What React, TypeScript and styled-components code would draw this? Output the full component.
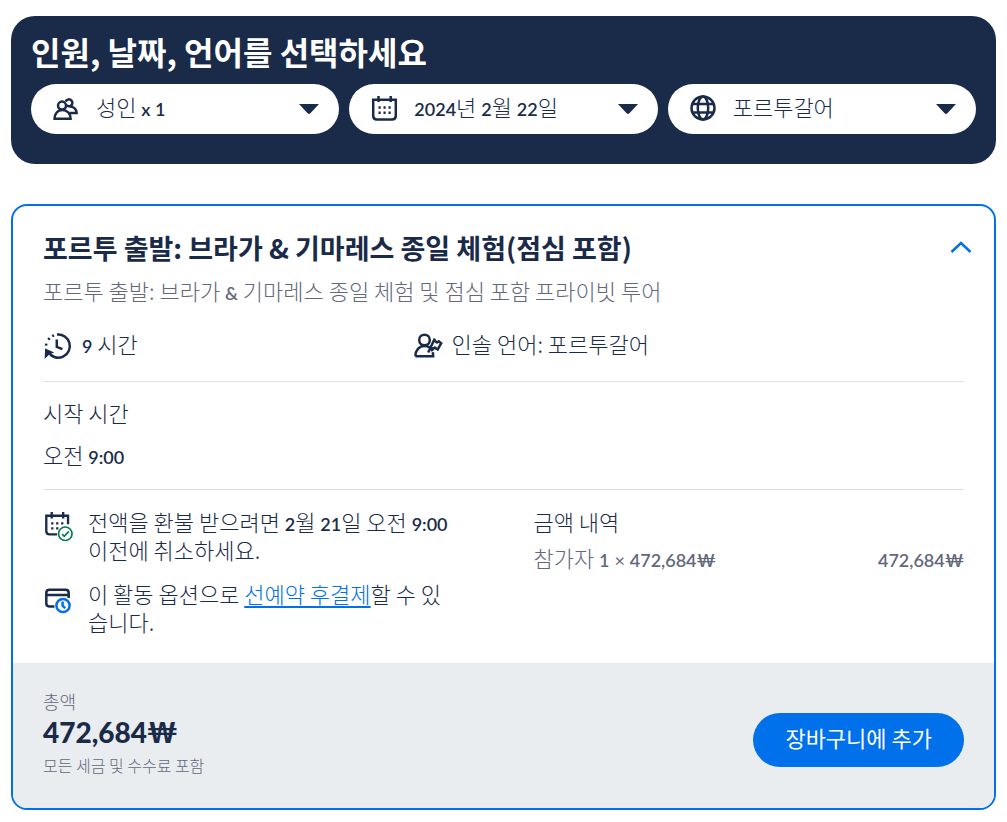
import React from "react";
import styled, { createGlobalStyle, css } from "styled-components";

const navy = "#1a2b49";
const blue = "#0071eb";
const grey = "#63687a";
const hangul = '"Noto Sans CJK KR", "Noto Sans", sans-serif';

const GlobalStyle = createGlobalStyle`
  * { box-sizing: border-box; }
  body {
    margin: 0;
    background: #fff;
    color: ${navy};
    font-family: ${hangul};
    font-size: 22px;
    font-weight: 300;
    line-height: 28px;
  }
  h2, h3, p, ul { margin: 0; padding: 0; font-weight: inherit; font-size: inherit; }
  ul { list-style: none; }
`;

const Page = styled.main`
  padding: 16px 11px 12px;
`;

const SearchPanel = styled.form`
  background: ${navy};
  border-radius: 24px;
  padding: 16px 20px 30px;
`;

const PanelTitle = styled.h2`
  && { font-size: 32px; font-weight: 700; }
  line-height: 38px;
  color: #fff;
  margin-bottom: 14px;
`;

const Fields = styled.div`
  display: grid;
  grid-template-columns: repeat(3, 1fr);
  gap: 10px;
`;

const pill = css`
  display: flex;
  align-items: center;
  gap: 15px;
  width: 100%;
  height: 50px;
  padding: 0 20px;
  border: 0;
  border-radius: 25px;
  background: #fff;
  color: ${navy};
  font: inherit;
  text-align: left;
  cursor: pointer;
`;

const PickerButton = styled.button`${pill}`;
const PickerLabel = styled.label`${pill}`;

const PickerText = styled.span`
  flex: 1;
  padding-bottom: 6px;
  white-space: nowrap;
`;

const PickerSelect = styled.select`
  flex: 1;
  min-width: 0;
  appearance: none;
  border: 0;
  padding: 0 0 6px;
  background: transparent;
  color: inherit;
  font: inherit;
`;

const Num = styled.span<{ $strong?: boolean; $thin?: boolean }>`
  font-family: Lato, ${hangul};
  font-size: ${(p) => (p.$strong ? "28px" : "18px")};
  font-weight: ${(p) => (p.$strong ? 900 : p.$thin ? 400 : 600)};
  line-height: 1;
`;

const Icon = styled.svg<{ $size?: number }>`
  display: block;
  flex: none;
  width: ${(p) => p.$size ?? 30}px;
  height: ${(p) => p.$size ?? 30}px;
  fill: none;
  stroke: currentColor;
  stroke-width: 2.5;
`;

const Caret = styled.svg`
  display: block;
  flex: none;
  width: 20px;
  height: 10px;
  fill: currentColor;
  pointer-events: none;
`;

const Card = styled.article`
  margin-top: 40px;
  border: 2px solid ${blue};
  border-radius: 16px;
  overflow: hidden;
`;

const Section = styled.section`
  margin: 0 30px;
  & + & { border-top: 1px solid #dcdfe4; }
`;

const Overview = styled(Section)`
  padding: 24px 0 20px;
`;

const TitleRow = styled.div`
  display: flex;
  align-items: center;
  justify-content: space-between;
`;

const CardTitle = styled.h3`
  && { font-size: 27px; font-weight: 700; }
  line-height: 36px;
`;

const Toggle = styled.button`
  border: 0;
  padding: 0;
  margin-right: -9px;
  background: none;
  color: ${blue};
  cursor: pointer;
`;

const Subtitle = styled.p`
  margin-top: 10px;
  color: ${grey};
`;

const Facts = styled.ul`
  display: grid;
  grid-template-columns: 2fr 3fr;
  column-gap: 2px;
  margin-top: 27px;
`;

const Fact = styled.li`
  display: flex;
  align-items: center;
  gap: 9px;
  height: 30px;
`;

const FactText = styled.span`
  padding-bottom: 6px;
`;

const StartTime = styled(Section)`
  display: grid;
  gap: 14px;
  padding: 16px 0 21px;
`;

const Details = styled(Section)`
  display: grid;
  grid-template-columns: 1fr 1fr;
  gap: 60px;
  padding: 17px 0 28px;
`;

const Notes = styled.ul`
  display: grid;
  gap: 16px;
  padding-right: 20px;
`;

const Note = styled.li`
  display: flex;
  gap: 15px;
  & > svg { margin-top: 5px; }
`;

const TextLink = styled.a`
  color: ${blue};
  text-decoration: underline 2px;
  text-underline-offset: 3px;
`;

const Breakdown = styled.div`
  display: grid;
  grid-template-columns: 1fr auto;
  align-content: start;
  align-items: baseline;
  row-gap: 8px;
  color: ${grey};
`;

const BreakdownTitle = styled.h3`
  grid-column: 1 / -1;
  color: ${navy};
`;

const Footer = styled.footer`
  display: flex;
  align-items: flex-end;
  justify-content: space-between;
  padding: 24px 30px 29px;
  background: #e9edf0;
`;

const Small = styled.p<{ $size: number }>`
  && { font-size: ${(p) => p.$size}px; }
  color: ${grey};
`;

const Price = styled.p`
  line-height: 36px;
`;

const CartButton = styled.button`
  height: 54px;
  margin-bottom: 12px;
  padding: 0 32px 6px;
  border: 0;
  border-radius: 27px;
  background: ${blue};
  color: #fff;
  font: inherit;
  font-weight: 400;
  cursor: pointer;
`;

const CaretDown = () => (
  <Caret viewBox="0 0 20 10" aria-hidden="true">
    <path d="M0 0h20l-8.600 9.200q-1.400 1.400-2.800 0z" />
  </Caret>
);

const PeopleIcon = () => (
  <Icon viewBox="0 0 30 30" aria-hidden="true">
    <circle cx="11" cy="11.600" r="4" />
    <path d="M3.600 24.800c0-5 2.900-8.800 7.800-8.800s8.200 3.800 8.200 8.800z" />
    <path d="M14.600 7.700a3.500 3.500 0 1 1 4 4.600c-1.500.2-2.600-.3-3.300-1.200M18.500 12.500c4.100 0 6.800 2.600 7.100 6.400h-7.200" />
  </Icon>
);

const CalendarIcon = () => (
  <Icon viewBox="0 0 30 30" aria-hidden="true">
    <path d="M4.200 5.800h22.600v16q0 3.700-3.700 3.700H7.900q-3.700 0-3.700-3.700zM9.500 2v6M21.700 2v6" />
    <path d="M9.500 13.500h2.200M14.500 13.500h2.200M19.500 13.500h2.200M9.500 18.800h2.200M14.500 18.800h2.200M19.500 18.800h2.200" />
  </Icon>
);

const GlobeIcon = () => (
  <Icon viewBox="0 0 30 30" aria-hidden="true">
    <circle cx="15" cy="14" r="11.500" />
    <ellipse cx="15" cy="14" rx="5.200" ry="11.500" />
    <path d="M4.500 10h21M4.500 18.500h21" />
  </Icon>
);

const DurationIcon = () => (
  <Icon viewBox="0 0 30 30" aria-hidden="true">
    <path d="M14 3.500A11.600 11.600 0 1 1 5.600 21.500" />
    <path d="M13.800 8.500v7.300l5.600 2.300" />
    <path d="M2.700 18.200l7 3.300-3.700 1.400-3.700 3.600z" fill="currentColor" strokeWidth="1.200" />
    <path d="M9.200 5.200l1.800-.9M5.200 8.700l1.500-1.600M3 14.600l.3-2" />
  </Icon>
);

const GuideIcon = () => (
  <Icon viewBox="0 0 30 30" aria-hidden="true">
    <circle cx="11.500" cy="9" r="5.300" />
    <path d="M2.400 25.200c0-5.800 3.700-10.200 9.100-10.200 3.700 0 6.600 2 8 5.200M2.400 25.200h17.800l-.4-4" />
    <path d="M15.200 21.500l6.600-14M21 9.200l3 2.200 1.700-1.200 2.500 2-3.500 6.300-2.800-1.900-1.800 1.200-2.400-1.400" />
  </Icon>
);

const CancelIcon = () => (
  <Icon viewBox="0 0 32 32" aria-hidden="true">
    <path d="M15 23.800H7.200Q3.500 23.800 3.500 20.500V4h23.200v9M9.300 0v7M21.500 0v7" />
    <path d="M8.700 12.200h2.400M14 12.200h2.400M19.300 12.200h2.400M8.700 17.500h2.400M14 17.500h2.400" />
    <g stroke="#077b51" strokeWidth="1.800">
      <circle cx="23.800" cy="23.200" r="7.200" fill="#fff" />
      <path d="M20.300 23.500l2.400 2.400 4.800-5.200" />
    </g>
  </Icon>
);

const PayLaterIcon = () => (
  <Icon viewBox="0 0 30 30" aria-hidden="true">
    <path d="M11.500 22.500H6.300q-3-.3-3-3V9q0-3.200 3.200-3.200h16q3.200 0 3.200 3.200v5M3.300 11h22.400" />
    <g stroke={blue}>
      <circle cx="20" cy="21.500" r="6.600" fill="#fff" />
      <path d="M19.600 17.500v4.300l2.600 2.400" />
    </g>
  </Icon>
);

export default function App() {
  return (
    <>
      <GlobalStyle />
      <Page>
        <SearchPanel>
          <PanelTitle>인원, 날짜, 언어를 선택하세요</PanelTitle>
          <Fields>
            <PickerButton type="button" aria-haspopup="dialog">
              <PeopleIcon />
              <PickerText>성인 <Num>x 1</Num></PickerText>
              <CaretDown />
            </PickerButton>
            <PickerButton type="button" aria-haspopup="dialog">
              <CalendarIcon />
              <PickerText>
                <Num>2024</Num>년 <Num>2</Num>월 <Num>22</Num>일
              </PickerText>
              <CaretDown />
            </PickerButton>
            <PickerLabel>
              <GlobeIcon />
              <PickerSelect aria-label="언어" defaultValue="pt">
                <option value="pt">포르투갈어</option>
              </PickerSelect>
              <CaretDown />
            </PickerLabel>
          </Fields>
        </SearchPanel>

        <Card>
          <Overview>
            <TitleRow>
              <CardTitle>포르투 출발: 브라가 &amp; 기마레스 종일 체험(점심 포함)</CardTitle>
              <Toggle type="button" aria-label="접기" aria-expanded="true">
                <Icon viewBox="0 0 24 24" $size={24} aria-hidden="true">
                  <path d="M2.500 16 12 7l9.500 9" />
                </Icon>
              </Toggle>
            </TitleRow>
            <Subtitle>
              포르투 출발: 브라가 <Num>&amp;</Num> 기마레스 종일 체험 및 점심 포함 프라이빗 투어
            </Subtitle>
            <Facts>
              <Fact>
                <DurationIcon />
                <FactText><Num>9</Num> 시간</FactText>
              </Fact>
              <Fact>
                <GuideIcon />
                <FactText>인솔 언어: 포르투갈어</FactText>
              </Fact>
            </Facts>
          </Overview>

          <StartTime>
            <h3>시작 시간</h3>
            <p>오전 <Num>9:00</Num></p>
          </StartTime>

          <Details>
            <Notes>
              <Note>
                <CancelIcon />
                <p>
                  전액을 환불 받으려면 <Num>2</Num>월 <Num>21</Num>일 오전 <Num>9:00</Num> 이전에 취소하세요.
                </p>
              </Note>
              <Note>
                <PayLaterIcon />
                <p>
                  이 활동 옵션으로 <TextLink href="#pay-later">선예약 후결제</TextLink>할 수 있습니다.
                </p>
              </Note>
            </Notes>
            <Breakdown>
              <BreakdownTitle>금액 내역</BreakdownTitle>
              <span>참가자 <Num>1</Num> <Num $thin>×</Num> <Num>472,684₩</Num></span>
              <Num>472,684₩</Num>
            </Breakdown>
          </Details>

          <Footer>
            <div>
              <Small $size={18}>총액</Small>
              <Price><Num $strong>472,684₩</Num></Price>
              <Small $size={16}>모든 세금 및 수수료 포함</Small>
            </div>
            <CartButton type="button">장바구니에 추가</CartButton>
          </Footer>
        </Card>
      </Page>
    </>
  );
}
